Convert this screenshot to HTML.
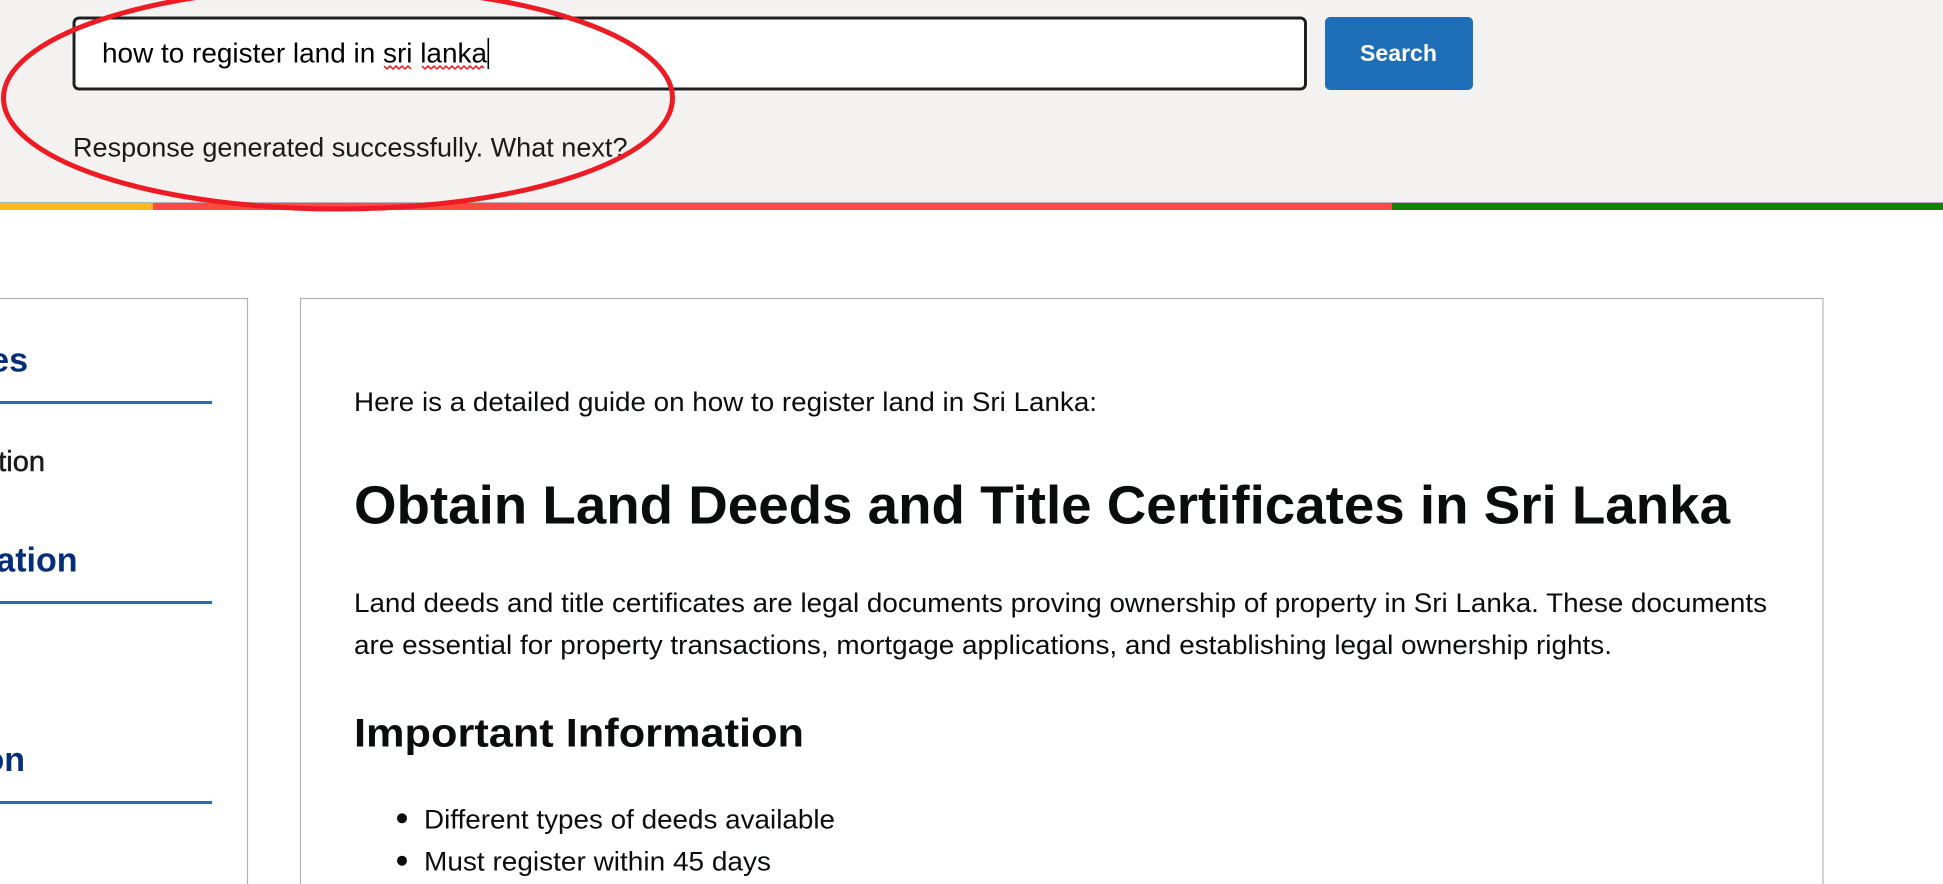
<!DOCTYPE html>
<html lang="en">
<head>
<meta charset="utf-8">
<title>Search response</title>
<style>
html,body{margin:0;padding:0;background:#fff;width:1943px;height:884px;overflow:hidden}
svg{display:block}
text{font-family:"Liberation Sans",Arial,sans-serif}
</style>
</head>
<body>
<svg width="1943" height="884" viewBox="0 0 1943 884" xmlns="http://www.w3.org/2000/svg">
<rect width="1943" height="202" fill="#f3f2f1"/>
<rect y="202" width="1943" height="1" fill="#b3b3b3"/>
<rect y="203" width="153" height="7" fill="#ffb81f"/>
<rect x="153" y="203" width="1239" height="7" fill="#ff4b3e"/>
<rect x="1392" y="203" width="551" height="7" fill="#128207"/>

<rect x="71.5" y="15.5" width="1237" height="76" rx="7" fill="#fff"/>
<rect x="74" y="18" width="1231.5" height="71" rx="5" fill="#fff" stroke="#1f1f1f" stroke-width="3"/>
<text x="102" y="62.3" font-size="27.5" fill="#000" textLength="385" lengthAdjust="spacingAndGlyphs">how to register land in sri lanka</text>
<rect x="487.5" y="38" width="1.6" height="31" fill="#000"/>
<path d="M384 66l3 3 3-3 3 3 3-3 3 3 3-3 3 3 3-3 3 3M422 66l3 3 3-3 3 3 3-3 3 3 3-3 3 3 3-3 3 3 3-3 3 3 3-3 3 3 3-3 3 3 3-3 3 3 3-3 3 3 3-3 2 2" fill="none" stroke="#f0141c" stroke-width="1.5"/>

<rect x="1325" y="17" width="148" height="73" rx="5" fill="#1e6fb8"/>
<text x="1360" y="61" font-size="23" font-weight="700" fill="#fff" textLength="77" lengthAdjust="spacingAndGlyphs">Search</text>

<text x="73" y="156.7" font-size="27" fill="#1b1a19" textLength="554.5" lengthAdjust="spacingAndGlyphs">Response generated successfully. What next?</text>

<ellipse cx="338" cy="98" rx="334.5" ry="111" fill="none" stroke="#ed1c24" stroke-width="5"/>

<path d="M-2 298.5H247.5V890" fill="none" stroke="#b3b3b3" stroke-width="1.2"/>
<text x="28" y="371.7" font-size="34" font-weight="700" fill="#052e78" text-anchor="end">es</text>
<rect x="0" y="401" width="212" height="3" fill="#1e6fb8"/>
<text x="45" y="471" font-size="29" fill="#1b1a19" stroke="#1b1a19" stroke-width=".5" text-anchor="end">tion</text>
<text x="77.5" y="571.7" font-size="34" font-weight="700" fill="#052e78" text-anchor="end">ation</text>
<rect x="0" y="601" width="212" height="3" fill="#1e6fb8"/>
<text x="25" y="771" font-size="34" font-weight="700" fill="#052e78" text-anchor="end">on</text>
<rect x="0" y="801" width="212" height="3" fill="#1e6fb8"/>

<path d="M300.5 890V298.5H1823V890" fill="none" stroke="#b3b3b3" stroke-width="1.2"/>
<text x="354" y="411" font-size="27" fill="#0b0c0c" textLength="743" lengthAdjust="spacingAndGlyphs">Here is a detailed guide on how to register land in Sri Lanka:</text>
<text x="354" y="523.5" font-size="54" font-weight="700" fill="#0b0c0c" textLength="1376" lengthAdjust="spacingAndGlyphs">Obtain Land Deeds and Title Certificates in Sri Lanka</text>
<text x="354" y="612" font-size="27" fill="#0b0c0c" textLength="1413" lengthAdjust="spacingAndGlyphs">Land deeds and title certificates are legal documents proving ownership of property in Sri Lanka. These documents</text>
<text x="354" y="654" font-size="27" fill="#0b0c0c" textLength="1258" lengthAdjust="spacingAndGlyphs">are essential for property transactions, mortgage applications, and establishing legal ownership rights.</text>
<text x="354" y="746.7" font-size="40" font-weight="700" fill="#0b0c0c" textLength="450" lengthAdjust="spacingAndGlyphs">Important Information</text>
<circle cx="402" cy="818.3" r="5" fill="#0b0c0c"/>
<text x="424" y="828.3" font-size="27" fill="#0b0c0c" textLength="411" lengthAdjust="spacingAndGlyphs">Different types of deeds available</text>
<circle cx="402" cy="860.7" r="5" fill="#0b0c0c"/>
<text x="424" y="870.7" font-size="27" fill="#0b0c0c" textLength="347" lengthAdjust="spacingAndGlyphs">Must register within 45 days</text>
</svg>
</body>
</html>
